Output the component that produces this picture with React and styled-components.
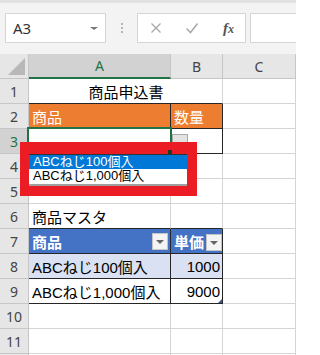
import React from "react";
import styled, { createGlobalStyle } from "styled-components";

const GlobalStyle = createGlobalStyle`
  body {
    margin: 0;
    background: #fff;
    overflow: hidden;
  }
`;

const CELL_FONT = `"Liberation Sans", "Noto Sans CJK JP", sans-serif`;
const GRID = "#d4d4d4";
const DARK = "#262626";

const Window = styled.div`
  width: 296px;
  height: 355px;
  overflow: hidden;
  background: #fff;
`;

const Toolbar = styled.div`
  box-sizing: border-box;
  height: 54px;
  background: #f3f3f3;
  border-top: 3px solid #e1e1e1;
  display: flex;
  align-items: flex-start;
  padding: 10px 0 0 5px;
`;

const NameBox = styled.div`
  box-sizing: border-box;
  width: 101px;
  height: 30px;
  background: #fff;
  border: 1px solid #d5d5d5;
  display: flex;
  align-items: center;
  justify-content: space-between;
  padding: 0 7px 0 7px;
  font-family: "Noto Sans", sans-serif;
  font-size: 15px;
  color: #333;
`;

const Caret = styled.span`
  width: 0;
  height: 0;
  border-left: 4px solid transparent;
  border-right: 4px solid transparent;
  border-top: 3px solid #777;
`;

const Dots = styled.div`
  width: 31px;
  height: 30px;
  display: flex;
  flex-direction: column;
  align-items: center;
  justify-content: center;
  gap: 2px;

  span {
    width: 2px;
    height: 2px;
    background: #b5b5b5;
  }
`;

const FxBox = styled.div`
  box-sizing: border-box;
  width: 109px;
  height: 30px;
  background: #fff;
  border: 1px solid #d5d5d5;
  display: grid;
  grid-template-columns: 36px 36px 1fr;
  align-items: center;
  justify-items: center;
`;

const FxLabel = styled.span`
  font-family: "Liberation Serif", serif;
  font-style: italic;
  font-weight: 700;
  font-size: 15px;
  color: #555;
  margin-left: 2px;

  small {
    font-size: 12px;
  }
`;

const FormulaInput = styled.div`
  box-sizing: border-box;
  flex: 1;
  margin-left: 4px;
  height: 30px;
  background: #fff;
  border: 1px solid #d5d5d5;
  border-right: none;
`;

const Sheet = styled.div`
  position: relative;
  display: grid;
  grid-template-columns: 29px 142px 52px 73px 1fr;
  grid-auto-rows: 25px;
`;

const Corner = styled.div`
  box-sizing: border-box;
  background: #e6e6e6;
  border-right: 1px solid #c6c6c6;
  border-bottom: 1px solid #c6c6c6;
  display: flex;
  align-items: flex-end;
  justify-content: flex-end;
  padding: 0 3px 3px 0;
`;

const ColHead = styled.div`
  box-sizing: border-box;
  background: ${(p) => (p.$active ? "#d2d2d2" : "#e6e6e6")};
  color: ${(p) => (p.$active ? "#217346" : "#444")};
  border-right: 1px solid #c6c6c6;
  border-bottom: ${(p) => (p.$active ? "2px solid #217346" : "1px solid #c6c6c6")};
  display: flex;
  align-items: center;
  justify-content: center;
  font-family: "Noto Sans", sans-serif;
  font-size: 14px;
`;

const RowHead = styled.div`
  box-sizing: border-box;
  background: ${(p) => (p.$active ? "#d2d2d2" : "#e6e6e6")};
  color: ${(p) => (p.$active ? "#217346" : "#444")};
  border-right: 1px solid #c6c6c6;
  border-bottom: 1px solid #c6c6c6;
  display: flex;
  align-items: center;
  justify-content: center;
  font-family: "Noto Sans", sans-serif;
  font-size: 14px;
`;

const Cell = styled.div`
  box-sizing: border-box;
  grid-column: span ${(p) => p.$span || 1};
  border-right: 1px solid ${(p) => (p.$r ? DARK : GRID)};
  border-bottom: 1px solid ${(p) => (p.$b ? DARK : GRID)};
  background: ${(p) => p.$bg || "#fff"};
  color: ${(p) => p.$color || "#000"};
  font-weight: ${(p) => (p.$bold ? 700 : 400)};
  display: flex;
  align-items: center;
  justify-content: ${(p) =>
    p.$align === "right" ? "flex-end" : p.$align === "center" ? "center" : "flex-start"};
  gap: 2px;
  padding: 0 2px 0 3px;
  font-family: ${CELL_FONT};
  font-size: 15px;
  white-space: nowrap;
  overflow: hidden;
  position: relative;
`;

const FilterBtn = styled.span`
  box-sizing: border-box;
  margin-left: auto;
  width: 16px;
  height: 17px;
  background: #f4f4f4;
  border: 1px solid #c4c4c4;
  display: flex;
  align-items: center;
  justify-content: center;
  flex-shrink: 0;
  margin-top: ${(p) => p.$drop || 0}px;

  &::after {
    content: "";
    border-left: 4px solid transparent;
    border-right: 4px solid transparent;
    border-top: 4px solid #666;
    margin-top: 1px;
  }
`;

const ResizeMark = styled.span`
  position: absolute;
  right: 0;
  bottom: 0;
  width: 0;
  height: 0;
  border-left: 4px solid transparent;
  border-bottom: 4px solid #2f55a4;
`;

const Selection = styled.div`
  position: absolute;
  left: 27px;
  top: 73px;
  width: 145px;
  height: 28px;
  box-sizing: border-box;
  border: 2px solid #217346;
  pointer-events: none;
`;

const FillHandle = styled.div`
  position: absolute;
  left: 168px;
  top: 96px;
  width: 4px;
  height: 4px;
  background: #1e3b2a;
  z-index: 3;
`;

const ValidationBtn = styled.div`
  position: absolute;
  left: 172px;
  top: 80px;
  width: 16px;
  height: 17px;
  box-sizing: border-box;
  background: #e3e3e3;
  border: 1px solid #ababab;
`;

const RedFrame = styled.div`
  position: absolute;
  left: 20px;
  top: 88px;
  width: 177px;
  height: 54px;
  box-sizing: border-box;
  background: #ec1c24;
  padding: 12px 10px 10px 9px;
  z-index: 2;
`;

const ListBox = styled.div`
  box-sizing: border-box;
  height: 100%;
  background: #fff;
  border-top: 1px solid #333;
  border-bottom: 2px solid #a0a0a0;
`;

const ListItem = styled.div`
  height: 14px;
  line-height: 14px;
  padding-left: 4px;
  font-family: ${CELL_FONT};
  font-size: 13px;
  background: ${(p) => (p.$selected ? "#0078d7" : "transparent")};
  color: ${(p) => (p.$selected ? "#fff" : "#000")};
  white-space: nowrap;
`;

const ORANGE = "#ed7d31";
const BLUE = "#4472c4";
const BAND = "#d9e1f2";

const rows = [
  { n: 1, cells: [{ text: "商品申込書", span: 2, align: "center", b: true }, {}, {}] },
  {
    n: 2,
    cells: [
      { text: "商品", bg: ORANGE, color: "#fff", r: true, b: true },
      { text: "数量", bg: ORANGE, color: "#fff", r: true, b: true },
      {},
      {},
    ],
  },
  { n: 3, active: true, cells: [{ r: true, b: true }, { r: true, b: true }, {}, {}] },
  { n: 4, cells: [{}, {}, {}, {}] },
  { n: 5, cells: [{}, {}, {}, {}] },
  { n: 6, cells: [{ text: "商品マスタ", b: true }, { b: true }, {}, {}] },
  {
    n: 7,
    cells: [
      { text: "商品", bg: BLUE, color: "#fff", bold: true, r: true, b: true, filter: 0 },
      { text: "単価", bg: BLUE, color: "#fff", bold: true, r: true, b: true, filter: 3 },
      {},
      {},
    ],
  },
  {
    n: 8,
    cells: [
      { text: "ABCねじ100個入", bg: BAND, r: true, b: true },
      { text: "1000", bg: BAND, align: "right", r: true, b: true },
      {},
      {},
    ],
  },
  {
    n: 9,
    cells: [
      { text: "ABCねじ1,000個入", r: true, b: true },
      { text: "9000", align: "right", r: true, b: true, resize: true },
      {},
      {},
    ],
  },
  { n: 10, cells: [{}, {}, {}, {}] },
  { n: 11, cells: [{}, {}, {}, {}] },
  // row 12 only peeks in at the bottom edge, its number is out of view
  { n: 12, hidden: true, cells: [{}, {}, {}, {}] },
];

const CrossIcon = () => (
  <svg width="12" height="12" viewBox="0 0 12 12">
    <path d="M1.5 1.5l9 9M10.5 1.5l-9 9" stroke="#a8a8a8" strokeWidth="1.3" fill="none" />
  </svg>
);

const CheckIcon = () => (
  <svg width="14" height="12" viewBox="0 0 14 12">
    <path d="M1.5 6.5l4 4 7-9" stroke="#a8a8a8" strokeWidth="1.5" fill="none" />
  </svg>
);

const CornerMark = () => (
  <svg width="17" height="17" viewBox="0 0 17 17">
    <path d="M17 0V17H0Z" fill="#b8b8b8" />
  </svg>
);

export default function App() {
  return (
    <Window>
      <GlobalStyle />
      <Toolbar>
        <NameBox>
          A3
          <Caret />
        </NameBox>
        <Dots>
          <span />
          <span />
          <span />
        </Dots>
        <FxBox>
          <CrossIcon />
          <CheckIcon />
          <FxLabel>
            f<small>x</small>
          </FxLabel>
        </FxBox>
        <FormulaInput />
      </Toolbar>

      <Sheet>
        <Corner>
          <CornerMark />
        </Corner>
        <ColHead $active>A</ColHead>
        <ColHead>B</ColHead>
        <ColHead>C</ColHead>
        <ColHead />

        {rows.map((row) => (
          <React.Fragment key={row.n}>
            <RowHead $active={row.active}>{row.hidden ? "" : row.n}</RowHead>
            {row.cells.map((c, i) => (
              <Cell
                key={i}
                $span={c.span}
                $bg={c.bg}
                $color={c.color}
                $bold={c.bold}
                $align={c.align}
                $r={c.r}
                $b={c.b}
              >
                {c.text && <span>{c.text}</span>}
                {c.filter !== undefined && <FilterBtn $drop={c.filter} />}
                {c.resize && <ResizeMark />}
              </Cell>
            ))}
          </React.Fragment>
        ))}

        <Selection />
        <ValidationBtn />
        <FillHandle />
        <RedFrame>
          <ListBox>
            <ListItem $selected>ABCねじ100個入</ListItem>
            <ListItem>ABCねじ1,000個入</ListItem>
          </ListBox>
        </RedFrame>
      </Sheet>
    </Window>
  );
}
